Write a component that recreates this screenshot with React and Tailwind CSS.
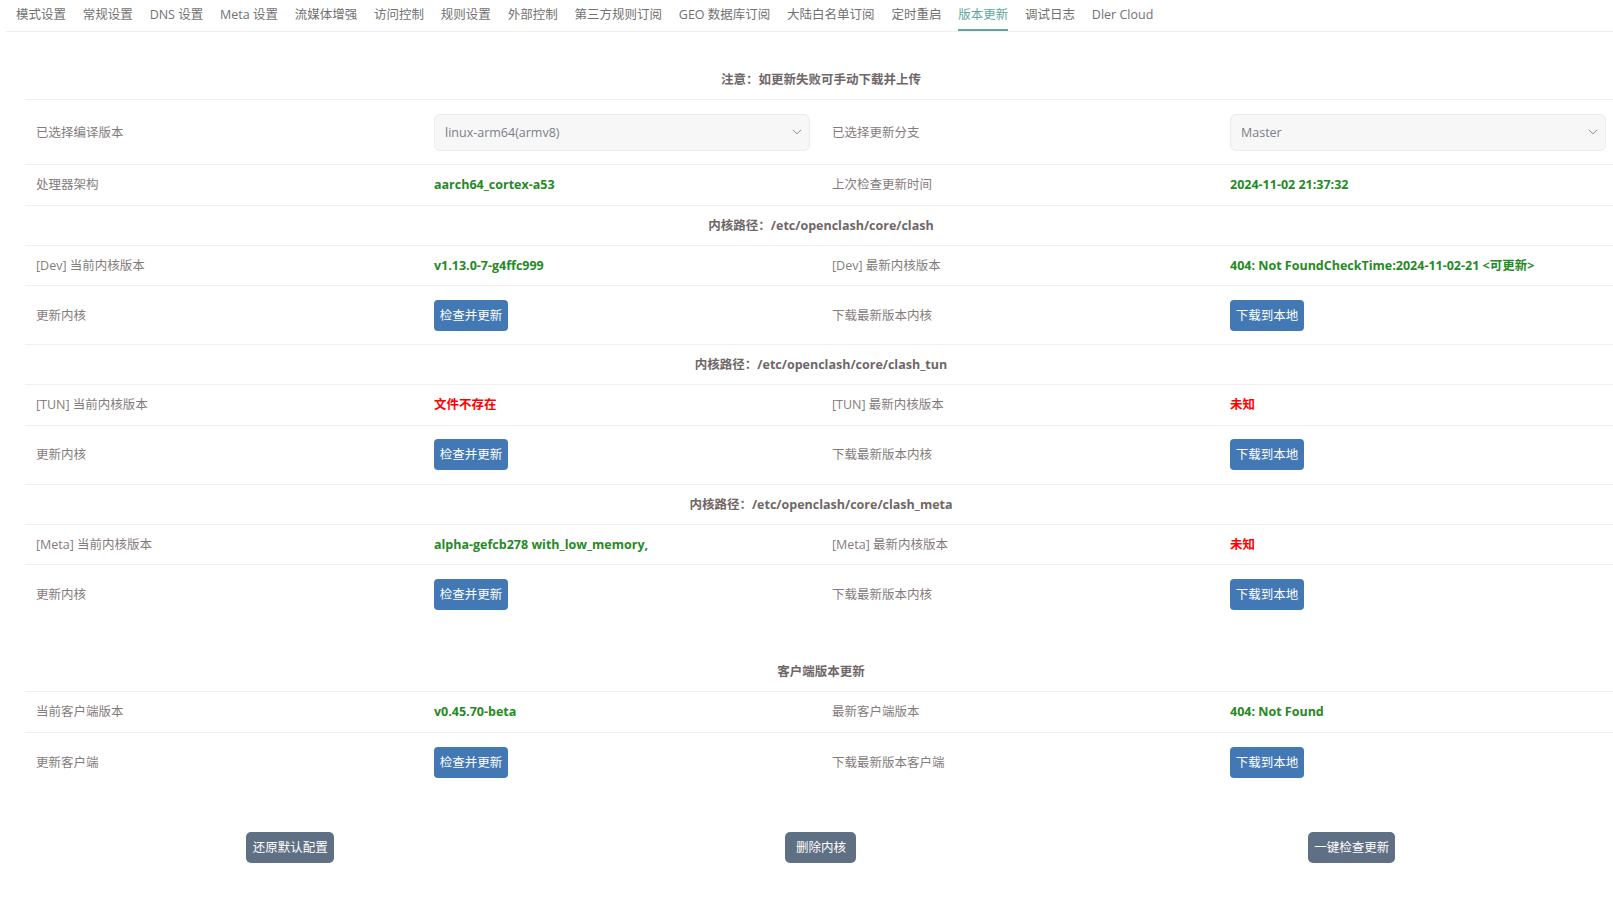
import React from "react";

const tabs = [
  "模式设置",
  "常规设置",
  "DNS 设置",
  "Meta 设置",
  "流媒体增强",
  "访问控制",
  "规则设置",
  "外部控制",
  "第三方规则订阅",
  "GEO 数据库订阅",
  "大陆白名单订阅",
  "定时重启",
  "版本更新",
  "调试日志",
  "Dler Cloud",
];

function Chevron() {
  return (
    <svg width="10" height="6" viewBox="0 0 10 6" className="shrink-0">
      <path d="M0.8 0.8 L5 4.8 L9.2 0.8" fill="none" stroke="#8c9096" strokeWidth="1" />
    </svg>
  );
}

function Select({ value }) {
  return (
    <div className="h-[37px] w-full flex items-center justify-between pl-[10px] pr-[7px] rounded-[6px] bg-[#f7f7f7] border border-[#ebebeb] text-[#7a8089]">
      <span>{value}</span>
      <Chevron />
    </div>
  );
}

function Header({ children }) {
  return (
    <div className="h-[40px] flex items-center justify-center font-bold text-[#6f6767]">
      {children}
    </div>
  );
}

function Label({ children }) {
  return <div className="px-[11px] text-[#847c7c]">{children}</div>;
}

function Green({ children }) {
  return <div className="px-[11px] font-bold text-[#248a24]">{children}</div>;
}

function Red({ children }) {
  return <div className="px-[11px] font-bold text-[#ff0000]">{children}</div>;
}

function BlueBtn({ children }) {
  return (
    <div className="px-[11px]">
      <div className="h-[31px] w-[74px] flex items-center justify-center rounded-[4px] bg-[#4279b4] text-white">
        {children}
      </div>
    </div>
  );
}

function Row({ children }) {
  return <div className="h-[40.5px] grid grid-cols-4 items-center">{children}</div>;
}

function BtnRow({ children }) {
  return <div className="h-[59px] grid grid-cols-4 items-center">{children}</div>;
}

function GrayBtn({ children, w }) {
  return (
    <div className={`h-[31px] ${w} flex items-center justify-center rounded-[5px] bg-[#5f7084] text-white`}>
      {children}
    </div>
  );
}

export default function App() {
  return (
    <div className="min-h-[901px] bg-white text-[12.5px] leading-[17px] font-['Open_Sans','Noto_Sans_CJK_SC',sans-serif] overflow-hidden">
      <div className="ml-[6px] pl-[10px] flex gap-[16.8px] border-b border-[#efefef]">
        {tabs.map((t) => (
          <div
            key={t}
            className={
              t === "版本更新"
                ? "pt-[6px] pb-[6px] leading-[17px] border-b-2 border-[#5fa898] text-[#5fa898] whitespace-nowrap"
                : "pt-[6px] pb-[6px] leading-[17px] border-b-2 border-transparent text-[#717171] whitespace-nowrap"
            }
          >
            {t}
          </div>
        ))}
      </div>

      <div className="ml-[25px] w-[1592px]">
        <div className="mt-[28px] flex flex-col divide-y divide-[#f0f0f0]">
          <Header>注意：如更新失败可手动下载并上传</Header>
          <div className="h-[65px] grid grid-cols-4 items-center">
            <Label>已选择编译版本</Label>
            <div className="px-[11px]">
              <Select value="linux-arm64(armv8)" />
            </div>
            <Label>已选择更新分支</Label>
            <div className="px-[11px]">
              <Select value="Master" />
            </div>
          </div>
          <Row>
            <Label>处理器架构</Label>
            <Green>aarch64_cortex-a53</Green>
            <Label>上次检查更新时间</Label>
            <Green>2024-11-02 21:37:32</Green>
          </Row>
          <Header>内核路径：/etc/openclash/core/clash</Header>
          <Row>
            <Label>[Dev] 当前内核版本</Label>
            <Green>v1.13.0-7-g4ffc999</Green>
            <Label>[Dev] 最新内核版本</Label>
            <Green>404: Not FoundCheckTime:2024-11-02-21 &lt;可更新&gt;</Green>
          </Row>
          <BtnRow>
            <Label>更新内核</Label>
            <BlueBtn>检查并更新</BlueBtn>
            <Label>下载最新版本内核</Label>
            <BlueBtn>下载到本地</BlueBtn>
          </BtnRow>
          <Header>内核路径：/etc/openclash/core/clash_tun</Header>
          <Row>
            <Label>[TUN] 当前内核版本</Label>
            <Red>文件不存在</Red>
            <Label>[TUN] 最新内核版本</Label>
            <Red>未知</Red>
          </Row>
          <BtnRow>
            <Label>更新内核</Label>
            <BlueBtn>检查并更新</BlueBtn>
            <Label>下载最新版本内核</Label>
            <BlueBtn>下载到本地</BlueBtn>
          </BtnRow>
          <Header>内核路径：/etc/openclash/core/clash_meta</Header>
          <Row>
            <Label>[Meta] 当前内核版本</Label>
            <Green>alpha-gefcb278 with_low_memory,</Green>
            <Label>[Meta] 最新内核版本</Label>
            <Red>未知</Red>
          </Row>
          <BtnRow>
            <Label>更新内核</Label>
            <BlueBtn>检查并更新</BlueBtn>
            <Label>下载最新版本内核</Label>
            <BlueBtn>下载到本地</BlueBtn>
          </BtnRow>
        </div>

        <div className="mt-[28px] flex flex-col divide-y divide-[#f0f0f0]">
          <Header>客户端版本更新</Header>
          <Row>
            <Label>当前客户端版本</Label>
            <Green>v0.45.70-beta</Green>
            <Label>最新客户端版本</Label>
            <Green>404: Not Found</Green>
          </Row>
          <BtnRow>
            <Label>更新客户端</Label>
            <BlueBtn>检查并更新</BlueBtn>
            <Label>下载最新版本客户端</Label>
            <BlueBtn>下载到本地</BlueBtn>
          </BtnRow>
        </div>

        <div className="pt-[40px] grid grid-cols-3">
          <div className="flex justify-center">
            <GrayBtn w="w-[88px]">还原默认配置</GrayBtn>
          </div>
          <div className="flex justify-center">
            <GrayBtn w="w-[71px]">删除内核</GrayBtn>
          </div>
          <div className="flex justify-center">
            <GrayBtn w="w-[87px]">一键检查更新</GrayBtn>
          </div>
        </div>
      </div>
    </div>
  );
}
